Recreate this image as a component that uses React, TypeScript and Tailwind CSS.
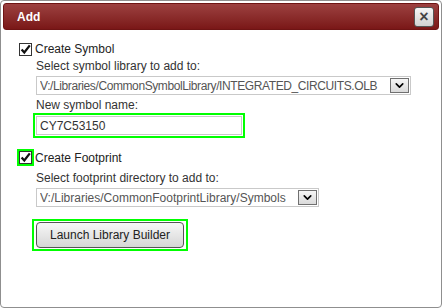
import { ChevronDown } from 'lucide-react'

const font = { fontFamily: '"Liberation Sans", Arial, sans-serif' }

function CheckBox() {
  return (
    <span className="relative block w-[13px] h-[13px] bg-white border border-[#333]">
      <svg viewBox="0 0 13 13" className="absolute -left-px -top-px w-[13px] h-[13px]">
        <path d="M2.6 6.4 L5.3 9.4 L10.8 2.4" fill="none" stroke="#111" strokeWidth="2.3" />
      </svg>
    </span>
  )
}

function Select({ value, width, tight }: { value: string; width: string; tight?: boolean }) {
  return (
    <div className={`flex items-center h-[19px] border border-[#c9c9c9] bg-white pl-[3px] pr-[1px] ${width}`}>
      <span
        className={`flex-1 text-[12px] leading-[16px] text-[#555] whitespace-nowrap overflow-hidden ${
          tight ? 'tracking-[-0.4px]' : ''
        }`}
      >
        {value}
      </span>
      <span className="flex items-center justify-center w-[19px] h-[15px] border border-[#707070] bg-gradient-to-b from-[#f6f6f6] to-[#dadada]">
        <ChevronDown size={13} strokeWidth={3} className="text-black" />
      </span>
    </div>
  )
}

export default function App() {
  return (
    <div style={font} className="w-[442px] h-[308px] bg-white border border-[#8f8f8f] rounded-[4px] p-[2px] text-[12px] text-[#222]">
      <div className="flex items-center justify-between h-[27px] pl-[13px] pr-[4px] rounded-[3px] border border-[#6e1414] bg-gradient-to-b from-[#9c4040] to-[#7a1717]">
        <span className="text-white font-bold text-[12px]">Add</span>
        <span className="flex items-center justify-center w-[20px] h-[20px] rounded-[3px] border border-[#555] bg-gradient-to-b from-[#f6f6f6] to-[#d2d2d2] text-[#444] font-bold text-[16px] leading-none">
          ×
        </span>
      </div>

      <div className="pl-[16px]">
        <div className="flex items-center gap-[3px] h-[16px] mt-[11px]">
          <CheckBox />
          <span className="leading-[16px]">Create Symbol</span>
        </div>

        <div className="ml-[17px]">
          <div className="leading-[16px] h-[16px] mt-[1px] text-[#333]">Select symbol library to add to:</div>
          <div className="mt-[2px]">
            <Select value="V:/Libraries/CommonSymbolLibrary/INTEGRATED_CIRCUITS.OLB" width="w-[375px]" tight />
          </div>
          <div className="leading-[16px] h-[16px] mt-[2px] text-[#333]">New symbol name:</div>
          <div className="-ml-[3px] w-[212px] h-[25px] border-2 border-[#00ff00] p-[1px]">
            <div className="h-[19px] border border-[#c9c9c9] pl-[3px] flex items-center text-[12px] text-[#333]">
              CY7C53150
            </div>
          </div>
        </div>

        <div className="flex items-center gap-[1px] h-[17px] mt-[11px] -ml-[2px]">
          <span className="border-2 border-[#00ff00]">
            <CheckBox />
          </span>
          <span className="leading-[16px]">Create Footprint</span>
        </div>

        <div className="ml-[17px]">
          <div className="leading-[16px] h-[16px] mt-[4px] text-[#333]">Select footprint directory to add to:</div>
          <div className="mt-[2px]">
            <Select value="V:/Libraries/CommonFootprintLibrary/Symbols" width="w-[283px]" />
          </div>
          <div className="mt-[12px] -ml-[4px] w-[156px] border-2 border-[#00ff00] px-[2px] py-[1px]">
            <button className="w-[148px] h-[26px] rounded-[4px] border border-[#555] bg-gradient-to-b from-[#f7f7f7] to-[#d6d6d6] text-[12px] text-[#222]">
              Launch Library Builder
            </button>
          </div>
        </div>
      </div>
    </div>
  )
}
